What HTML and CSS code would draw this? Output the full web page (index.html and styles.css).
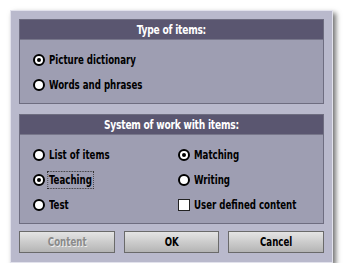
FILE: index.html
```html
<!DOCTYPE html>
<html lang="en">

<head>
  <meta charset="UTF-8">
  <title>Options</title>
  <link rel="stylesheet" href="styles.css">
</head>

<body>
  <div class="window">
    <!-- Type of items -->
    <section class="panel">
      <h2 class="panel-title"><span class="narrow">Type of items:</span></h2>
      <div class="panel-body one-col">
        <div class="opt"><span class="radio checked"></span><span class="label">Picture dictionary</span></div>
        <div class="opt"><span class="radio"></span><span class="label">Words and phrases</span></div>
      </div>
    </section>

    <!-- System of work -->
    <section class="panel panel-work">
      <h2 class="panel-title"><span class="narrow">System of work with items:</span></h2>
      <div class="panel-body two-col">
        <div class="opt"><span class="radio"></span><span class="label">List of items</span></div>
        <div class="opt"><span class="radio checked"></span><span class="label">Matching</span></div>
        <div class="opt"><span class="radio checked"></span><span class="label focus">Teaching</span></div>
        <div class="opt"><span class="radio"></span><span class="label">Writing</span></div>
        <div class="opt"><span class="radio"></span><span class="label">Test</span></div>
        <div class="opt"><span class="check"></span><span class="label">User defined content</span></div>
      </div>
    </section>

    <div class="buttons">
      <button class="btn" disabled><span class="narrow">Content</span></button>
      <button class="btn"><span class="narrow">OK</span></button>
      <button class="btn"><span class="narrow">Cancel</span></button>
    </div>
  </div>
</body>
</html>
```

FILE: styles.css
```css
html,
body {
  margin: 0;
  padding: 0;
}

body {
  background-color: #ffffff;
  font-family: "DejaVu Sans Condensed", "DejaVu Sans", sans-serif;
  padding: 10px 0 0 10px;
}

.window {
  width: 305px;
  background-color: #b9b9cc;
  border: 1px solid #e2e2ec;
  padding: 8px 8px 9px 8px;
  box-shadow: 3px 3px 5px rgba(0, 0, 0, 0.55);
}

.panel {
  border: 1px solid #6e6d80;
  background-color: #9e9eb2;
}

.panel-work {
  margin-top: 10px;
}

/* the original font is a narrow one, squeeze the condensed face */
.narrow {
  display: inline-block;
  transform: scaleX(0.8);
}

.panel-title {
  margin: 0;
  height: 19px;
  line-height: 19px;
  background-color: #5a5670;
  border-bottom: 1px solid #77768a;
  color: #ffffff;
  font-size: 13px;
  font-weight: bold;
  text-align: center;
  letter-spacing: -0.3px;
}

.panel-title .narrow {
  transform: scaleX(0.78);
}

.panel-body {
  padding: 7px 0 6px 13px;
}

.two-col {
  display: grid;
  grid-template-columns: 145px 1fr;
  padding-bottom: 6px;
}

.opt {
  height: 25px;
  display: flex;
  align-items: center;
  gap: 4px;
  font-size: 12px;
  font-weight: bold;
  color: #000000;
}

.label {
  display: inline-block;
  transform: scaleX(0.8);
  transform-origin: left center;
}

.radio {
  box-sizing: border-box;
  width: 12px;
  height: 12px;
  border: 2px solid #000000;
  border-radius: 50%;
  background-color: #ffffff;
  display: flex;
  align-items: center;
  justify-content: center;
}

.radio.checked::after {
  content: "";
  width: 4px;
  height: 4px;
  border-radius: 50%;
  background-color: #000000;
}

.check {
  box-sizing: border-box;
  width: 12px;
  height: 12px;
  border: 1px solid #222222;
  background-color: #ffffff;
}

.focus {
  outline: 1px dotted #333333;
  outline-offset: 1px;
}

.buttons {
  display: grid;
  grid-template-columns: repeat(3, 1fr);
  gap: 9px;
  margin-top: 7px;
}

.btn {
  height: 22px;
  border: 1px solid #6a6a6a;
  background: linear-gradient(#e4e4e4, #b4b4b4);
  font-family: "DejaVu Sans Condensed", "DejaVu Sans", sans-serif;
  font-size: 12px;
  font-weight: bold;
  color: #000000;
  padding: 0;
}

.btn:disabled {
  color: #8a8a8a;
  text-shadow: 1px 1px 0 #eeeeee;
}
```
